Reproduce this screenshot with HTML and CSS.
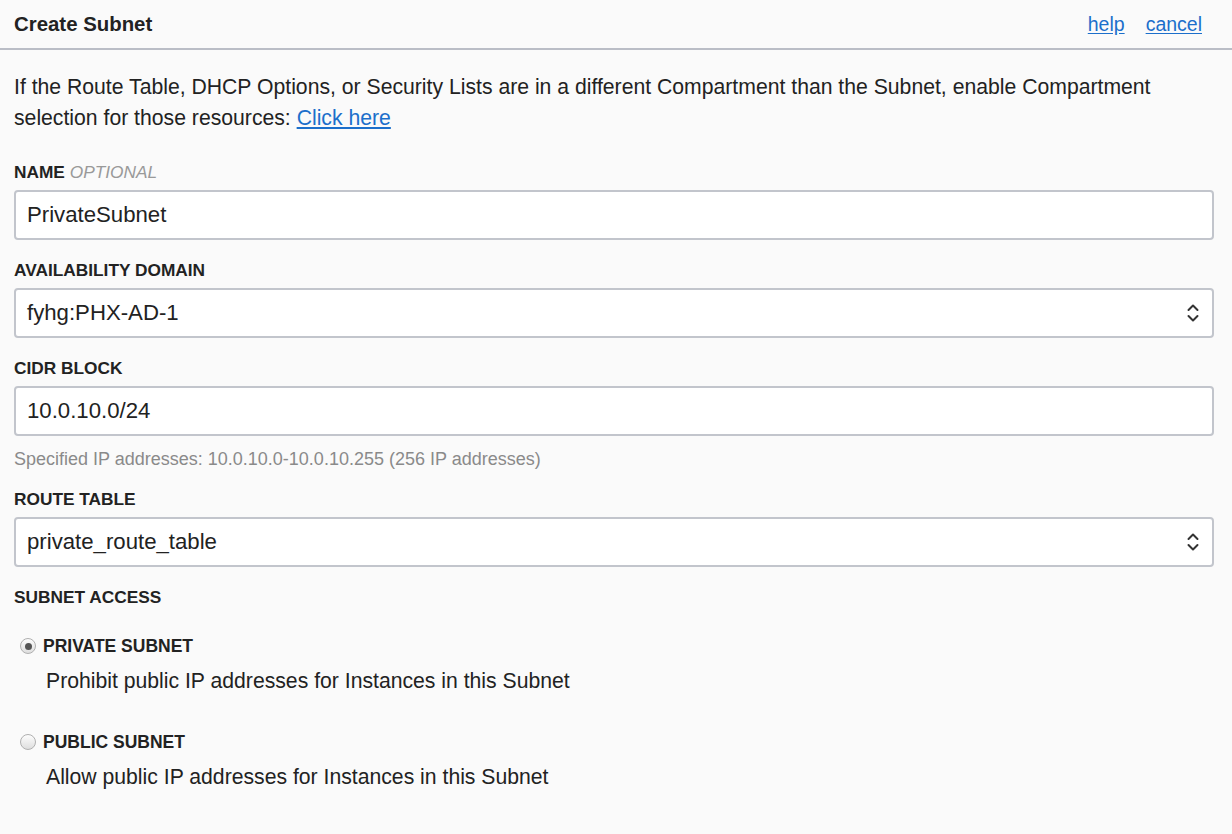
FILE: index.html
```html
<!DOCTYPE html>
<html lang="en">
<head>
<meta charset="utf-8">
<title>Create Subnet</title>
<link rel="stylesheet" href="styles.css">
</head>
<body>
<div class="panel">
  <header class="panel-header">
    <h1 class="panel-title">Create Subnet</h1>
    <nav class="header-links">
      <a href="#" class="link">help</a>
      <a href="#" class="link">cancel</a>
    </nav>
  </header>
  <main class="panel-body">
    <p class="intro">If the Route Table, DHCP Options, or Security Lists are in a different Compartment than the Subnet, enable Compartment selection for those resources: <a href="#" class="link">Click here</a></p>

    <div class="field">
      <label class="field-label">NAME <span class="optional">OPTIONAL</span></label>
      <div class="control">PrivateSubnet</div>
    </div>

    <div class="field">
      <label class="field-label">AVAILABILITY DOMAIN</label>
      <div class="control select">
        <span>fyhg:PHX-AD-1</span>
        <svg class="chevrons" width="12" height="22" viewBox="0 0 12 22"><path d="M1.5 8 L6 3.5 L10.5 8 M1.5 14 L6 18.5 L10.5 14" fill="none" stroke="#333" stroke-width="2" stroke-linecap="round" stroke-linejoin="round"/></svg>
      </div>
    </div>

    <div class="field">
      <label class="field-label">CIDR BLOCK</label>
      <div class="control">10.0.10.0/24</div>
      <div class="help-text">Specified IP addresses: 10.0.10.0-10.0.10.255 (256 IP addresses)</div>
    </div>

    <div class="field">
      <label class="field-label">ROUTE TABLE</label>
      <div class="control select">
        <span>private_route_table</span>
        <svg class="chevrons" width="12" height="22" viewBox="0 0 12 22"><path d="M1.5 8 L6 3.5 L10.5 8 M1.5 14 L6 18.5 L10.5 14" fill="none" stroke="#333" stroke-width="2" stroke-linecap="round" stroke-linejoin="round"/></svg>
      </div>
    </div>

    <div class="field">
      <label class="field-label">SUBNET ACCESS</label>
      <div class="radio-group">
        <div class="radio-option">
          <div class="radio-row"><span class="radio checked"></span><span class="radio-label">PRIVATE SUBNET</span></div>
          <div class="radio-desc">Prohibit public IP addresses for Instances in this Subnet</div>
        </div>
        <div class="radio-option">
          <div class="radio-row"><span class="radio"></span><span class="radio-label">PUBLIC SUBNET</span></div>
          <div class="radio-desc">Allow public IP addresses for Instances in this Subnet</div>
        </div>
      </div>
    </div>
  </main>
</div>
</body>
</html>
```
FILE: styles.css
```css
html, body {
  margin: 0;
  padding: 0;
  background: #fafafa;
  font-family: "Liberation Sans", Arial, sans-serif;
  color: #222;
}
.panel {
  min-height: 834px;
}
.panel-header {
  height: 48px;
  display: flex;
  align-items: center;
  justify-content: space-between;
  padding: 0 30px 0 14px;
  border-bottom: 2px solid #babdc6;
}
.panel-title {
  margin: 0;
  font-size: 20.4px;
  font-weight: bold;
  color: #222;
}
.header-links {
  display: flex;
  gap: 21px;
  font-size: 19.5px;
}
.link {
  color: #1c6fcb;
  text-decoration: underline;
  text-underline-offset: 2px;
}
.panel-body {
  padding: 21px 18px 0 14px;
}
.intro {
  margin: 0 0 29px;
  font-size: 21.2px;
  line-height: 31px;
}
.field {
  margin-bottom: 20px;
}
.field-label {
  display: block;
  font-size: 17.3px;
  line-height: 20px;
  font-weight: bold;
  margin-bottom: 8px;
  color: #222;
}
.optional {
  font-weight: normal;
  font-style: italic;
  color: #999;
}
.control {
  box-sizing: border-box;
  height: 50px;
  border: 2px solid #c2c5cc;
  border-radius: 4px;
  background: #fff;
  display: flex;
  align-items: center;
  padding: 0 11px;
  font-size: 22.2px;
  color: #222;
}
.select {
  justify-content: space-between;
  padding-right: 13px;
}
.chevrons {
  display: block;
}
.help-text {
  margin-top: 13px;
  font-size: 18px;
  line-height: 20px;
  color: #8a8a8a;
}
.radio-group {
  padding-top: 19px;
}
.radio-option {
  margin-bottom: 37px;
}
.radio-row {
  display: flex;
  align-items: center;
  padding-left: 6px;
  height: 24px;
}
.radio {
  box-sizing: border-box;
  width: 16px;
  height: 16px;
  border-radius: 50%;
  border: 1px solid #b0b0b0;
  background: linear-gradient(#fdfdfd, #dedede);
  margin-right: 7px;
  position: relative;
}
.radio.checked::after {
  content: "";
  position: absolute;
  left: 3.5px;
  top: 3.5px;
  width: 7px;
  height: 7px;
  border-radius: 50%;
  background: #555;
}
.radio-label {
  font-size: 17.5px;
  font-weight: bold;
}
.radio-desc {
  margin-top: 11px;
  padding-left: 32px;
  font-size: 21.2px;
  line-height: 24px;
}
```
